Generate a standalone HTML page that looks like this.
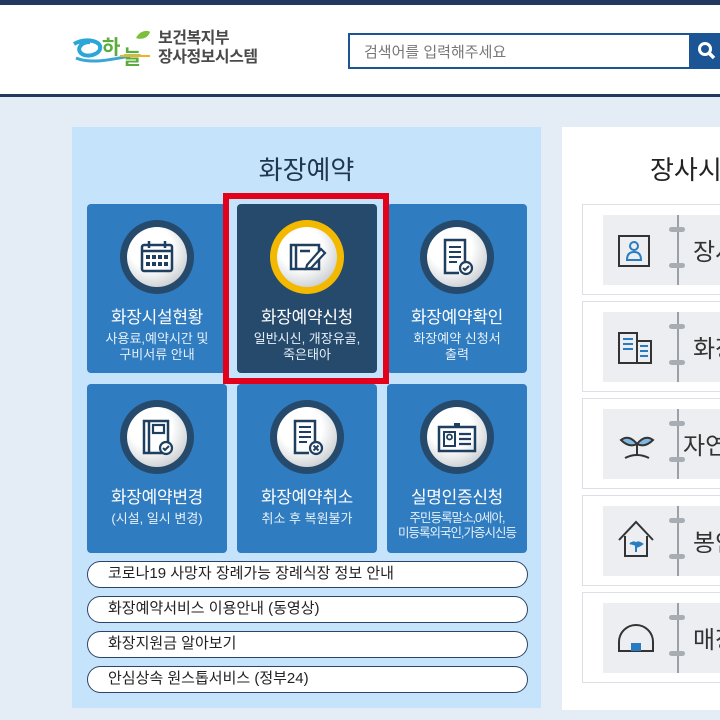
<!DOCTYPE html>
<html><head><meta charset="utf-8"><style>
*{margin:0;padding:0;box-sizing:border-box}
body{width:720px;height:720px;overflow:hidden;background:#e4edf6;font-family:"Liberation Sans","Noto Sans CJK KR",sans-serif;position:relative}
.a{position:absolute}
.tile{position:absolute;width:140px;height:169px;background:#2f7cc0;border-radius:4px;color:#fff;text-align:center}
.tile.sel{background:#264a6c}
.circ{position:absolute;left:33px;top:16px;width:74px;height:74px;border-radius:50%;background:#264a6c}
.tile.sel .circ{background:#f3b900}
.circ .in{position:absolute;left:7px;top:7px;width:60px;height:60px;border-radius:50%;background:radial-gradient(circle at 40% 35%,#fff 40%,#d0d3d6 75%,#9ea3a8 100%)}
.circ svg{position:absolute;left:15px;top:15px}
.t{position:absolute;top:99px;left:0;width:100%;font-size:17px;letter-spacing:-0.3px}
.s{position:absolute;top:127px;left:0;width:100%;font-size:13px;line-height:16px;color:#e6f0fa}
.lnk{position:absolute;left:87px;width:441px;height:27px;border:1.5px solid #2b4566;border-radius:14px;background:#fff;font-size:15px;color:#222;padding-left:20px;line-height:24px}
.card{position:absolute;left:582px;width:200px;height:91px;border:1px solid #dcdfe3;background:#fff}
.card .g{position:absolute;left:20px;top:10px;width:180px;height:70px;background:#eceef1}
.card .sp{position:absolute;left:74px;top:0;width:1.5px;height:70px;background:#9aa0a6}
.card .r{position:absolute;left:66px;width:16px;height:5px;border-radius:3px;background:#a8adb3}
.card .k{position:absolute;left:90px;top:17px;font-size:24px;color:#333;white-space:nowrap}
.card svg{position:absolute;left:14px;top:15px}
</style></head><body>
<div class="a" style="left:0;top:0;width:720px;height:5px;background:#22385e"></div>
<div class="a" style="left:0;top:5px;width:720px;height:89px;background:#fff"></div>
<div class="a" style="left:0;top:94px;width:720px;height:3px;background:#23385c"></div>
<svg class="a" style="left:70px;top:28px" width="82" height="40" viewBox="0 0 82 40">
<path d="M4 16 C14 10 28 12 30 18 C32 26 18 30 12 26 C6 22 10 14 20 14" fill="none" stroke="#2aa6d8" stroke-width="4"/>
<path d="M6 30 C20 36 40 32 60 28" fill="none" stroke="#3aa6d6" stroke-width="3"/>
<text x="32" y="26" font-family="Noto Sans CJK KR" font-weight="bold" font-size="20" fill="#5aad3c">하</text>
<text x="53" y="36" font-family="Noto Sans CJK KR" font-weight="bold" font-size="20" fill="#5aad3c">늘</text>
<path d="M66 10 C70 2 78 2 80 4 C78 10 72 12 66 10Z" fill="#7bbf3a"/>
<path d="M50 28 L80 28" stroke="#f2b21a" stroke-width="2"/>
</svg>
<div class="a" style="left:158px;top:29px;font-size:16px;line-height:19px;font-weight:bold;color:#4a4a4a;letter-spacing:-0.5px">보건복지부<br>장사정보시스템</div>
<div class="a" style="left:348px;top:33px;width:343px;height:36px;border:2.5px solid #1b5596;background:#fff;font-size:15px;color:#777;padding:6px 0 0 14px">검색어를 입력해주세요</div>
<div class="a" style="left:690px;top:33px;width:30px;height:36px;background:#1b5596"></div>
<svg class="a" style="left:697px;top:41px" width="20" height="20"><circle cx="8" cy="8" r="5.5" fill="none" stroke="#fff" stroke-width="3"/><path d="M12 12 L17 17" stroke="#fff" stroke-width="3.5"/></svg>
<div class="a" style="left:72px;top:127px;width:469px;height:581px;background:#c5e3fb"></div>
<div class="a" style="left:72px;top:150px;width:469px;text-align:center;font-size:26px;color:#1f3550">화장예약</div>
<div class="tile" style="left:87px;top:204px"><div class="circ"><div class="in"></div><svg width="44" height="44" viewBox="0 0 44 44"><rect x="7" y="10" width="30" height="26" rx="2" fill="none" stroke="#1f3f60" stroke-width="2.5"/><path d="M7 16h30M14 6v7M30 6v7" stroke="#1f3f60" stroke-width="2.5"/><g fill="#1f3f60"><rect x="11" y="20" width="4" height="4"/><rect x="17" y="20" width="4" height="4"/><rect x="23" y="20" width="4" height="4"/><rect x="29" y="20" width="4" height="4"/><rect x="11" y="27" width="4" height="4"/><rect x="17" y="27" width="4" height="4"/><rect x="23" y="27" width="4" height="4"/><rect x="29" y="27" width="4" height="4"/></g></svg></div><div class="t">화장시설현황</div><div class="s">사용료,예약시간 및<br>구비서류 안내</div></div>
<div class="tile sel" style="left:237px;top:204px"><div class="circ"><div class="in"></div><svg width="44" height="44" viewBox="0 0 44 44"><rect x="6" y="10" width="28" height="24" fill="none" stroke="#1f3f60" stroke-width="2.5"/><path d="M11 10v24M15 16h10" stroke="#1f3f60" stroke-width="2.5"/><path d="M22 30 L36 14 L40 18 L26 33 L21 34Z" fill="#fff" stroke="#1f3f60" stroke-width="2.2"/></svg></div><div class="t">화장예약신청</div><div class="s">일반시신, 개장유골,<br>죽은태아</div></div>
<div class="tile" style="left:387px;top:204px"><div class="circ"><div class="in"></div><svg width="44" height="44" viewBox="0 0 44 44"><path d="M30 30V5H10v33h14" fill="none" stroke="#1f3f60" stroke-width="2.5"/><path d="M14 12h12M14 17h12M14 22h12M14 27h8" stroke="#1f3f60" stroke-width="2"/><circle cx="31" cy="33" r="6" fill="#fff" stroke="#1f3f60" stroke-width="2.2"/><path d="M28 33l2 2 4-4" fill="none" stroke="#1f3f60" stroke-width="2"/></svg></div><div class="t">화장예약확인</div><div class="s">화장예약 신청서<br>출력</div></div>
<div class="tile" style="left:87px;top:384px"><div class="circ"><div class="in"></div><svg width="44" height="44" viewBox="0 0 44 44"><rect x="9" y="6" width="24" height="32" fill="none" stroke="#1f3f60" stroke-width="2.5"/><path d="M14 6v32" stroke="#1f3f60" stroke-width="2.5"/><rect x="18" y="10" width="11" height="8" fill="none" stroke="#1f3f60" stroke-width="2.2"/><circle cx="31" cy="33" r="6" fill="#fff" stroke="#1f3f60" stroke-width="2.2"/><path d="M28 33l2 2 4-4" fill="none" stroke="#1f3f60" stroke-width="2"/></svg></div><div class="t">화장예약변경</div><div class="s">(시설, 일시 변경)</div></div>
<div class="tile" style="left:237px;top:384px"><div class="circ"><div class="in"></div><svg width="44" height="44" viewBox="0 0 44 44"><path d="M30 28V6H10v32h14" fill="none" stroke="#1f3f60" stroke-width="2.5"/><path d="M14 12h12M14 17h12M14 22h12M14 27h8" stroke="#1f3f60" stroke-width="2"/><circle cx="31" cy="33" r="6" fill="#fff" stroke="#1f3f60" stroke-width="2.2"/><path d="M28.5 30.5l5 5M33.5 30.5l-5 5" stroke="#1f3f60" stroke-width="2"/></svg></div><div class="t">화장예약취소</div><div class="s">취소 후 복원불가</div></div>
<div class="tile" style="left:387px;top:384px"><div class="circ"><div class="in"></div><svg width="44" height="44" viewBox="0 0 44 44"><rect x="4" y="12" width="36" height="24" fill="none" stroke="#1f3f60" stroke-width="2.5"/><path d="M19 8h6v5h-6z" fill="#1f3f60"/><rect x="9" y="17" width="11" height="14" fill="none" stroke="#1f3f60" stroke-width="2"/><circle cx="14.5" cy="22" r="2.5" fill="none" stroke="#1f3f60" stroke-width="1.8"/><path d="M24 19h12M24 24h12M24 29h12" stroke="#1f3f60" stroke-width="2.2"/></svg></div><div class="t">실명인증신청</div><div class="s" style="font-size:12.5px;letter-spacing:-1px;line-height:15px">주민등록말소,0세아,<br>미등록외국인,가증시신등</div></div>
<div class="a" style="left:223px;top:193px;width:166px;height:191px;border:6px solid #e3001b"></div>
<div class="lnk" style="top:561px">코로나19 사망자 장례가능 장례식장 정보 안내</div>
<div class="lnk" style="top:596px">화장예약서비스 이용안내 (동영상)</div>
<div class="lnk" style="top:631px">화장지원금 알아보기</div>
<div class="lnk" style="top:666px">안심상속 원스톱서비스 (정부24)</div>
<div class="a" style="left:562px;top:127px;width:158px;height:583px;background:#fff;overflow:hidden"></div>
<div class="a" style="left:650px;top:150px;font-size:26px;color:#222;white-space:nowrap">장사시설</div>
<div class="card" style="top:204px"><div class="g"><svg width="36" height="40"><rect x="2" y="6" width="30" height="30" fill="none" stroke="#333" stroke-width="2"/><circle cx="17" cy="16" r="4" fill="none" stroke="#2a7cc0" stroke-width="2"/><path d="M10 30 q0-8 7-8 q7 0 7 8z" fill="none" stroke="#2a7cc0" stroke-width="2"/></svg><div class="sp"></div><div class="r" style="top:12px"></div><div class="r" style="top:48px"></div><div class="k">장사</div></div></div>
<div class="card" style="top:301px"><div class="g"><svg width="40" height="40"><rect x="2" y="6" width="18" height="30" fill="none" stroke="#333" stroke-width="2"/><rect x="20" y="14" width="14" height="22" fill="none" stroke="#333" stroke-width="2"/><path d="M6 12h10M6 17h10M6 22h10M23 19h8M23 24h8M23 29h8" stroke="#2a7cc0" stroke-width="2"/></svg><div class="sp"></div><div class="r" style="top:12px"></div><div class="r" style="top:48px"></div><div class="k">화장</div></div></div>
<div class="card" style="top:398px"><div class="g"><svg width="40" height="40"><path d="M4 16 q8 -6 16 4 q8 -10 16 -4 q-8 8 -16 4 q-8 4 -16 -4z" fill="#7eb7e0" stroke="#333" stroke-width="2"/><path d="M20 20v12M8 34 q12 -6 24 0" fill="none" stroke="#333" stroke-width="2"/></svg><div class="sp"></div><div class="r" style="top:12px"></div><div class="r" style="top:48px"></div><div class="k" style="left:80px">자연</div></div></div>
<div class="card" style="top:495px"><div class="g"><svg width="40" height="46" style="top:8px"><path d="M2 26 L19 8 L36 26M8 22v20h22V22" fill="none" stroke="#333" stroke-width="2"/><path d="M19 38v-6 M13 30 q6 -4 6 2 q0 -6 6 -2 q-6 4 -6 2" fill="#2a7cc0" stroke="#2a7cc0" stroke-width="2"/></svg><div class="sp"></div><div class="r" style="top:12px"></div><div class="r" style="top:48px"></div><div class="k">봉안</div></div></div>
<div class="card" style="top:592px"><div class="g"><svg width="40" height="40"><path d="M2 33 V24 a16 16 0 0 1 34 0 V33 z" fill="none" stroke="#333" stroke-width="2"/><rect x="14" y="25" width="10" height="8" fill="#2a7cc0"/></svg><div class="sp"></div><div class="r" style="top:12px"></div><div class="r" style="top:48px"></div><div class="k">매장</div></div></div>
</body></html>
